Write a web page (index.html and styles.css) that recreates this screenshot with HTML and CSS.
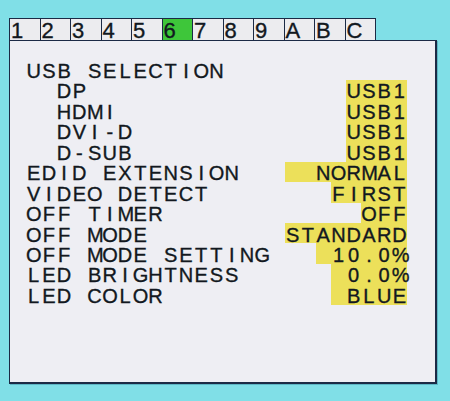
FILE: index.html
```html
<!DOCTYPE html>
<html>
<head>
<meta charset="utf-8">
<title>OSD</title>
<link rel="stylesheet" href="styles.css">
</head>
<body>
<div class="osd">
  <div class="tabs">
    <div class="tab">1</div><div class="tab">2</div><div class="tab">3</div><div class="tab">4</div><div class="tab">5</div><div class="tab on">6</div><div class="tab">7</div><div class="tab">8</div><div class="tab">9</div><div class="tab">A</div><div class="tab">B</div><div class="tab">C</div>
  </div>
  <div class="panel">
    <div class="row">
      <span class="lbl"><span class="c">U</span><span class="c">S</span><span class="c">B</span><span class="c">&nbsp;</span><span class="c">S</span><span class="c">E</span><span class="c">L</span><span class="c">E</span><span class="c">C</span><span class="c">T</span><span class="c">I</span><span class="c">O</span><span class="c">N</span></span>
    </div>
    <div class="row">
      <span class="lbl"><span class="c">&nbsp;</span><span class="c">&nbsp;</span><span class="c">D</span><span class="c">P</span></span>
      <span class="val"><span class="c">U</span><span class="c">S</span><span class="c">B</span><span class="c">1</span></span>
    </div>
    <div class="row">
      <span class="lbl"><span class="c">&nbsp;</span><span class="c">&nbsp;</span><span class="c">H</span><span class="c">D</span><span class="c">M</span><span class="c">I</span></span>
      <span class="val"><span class="c">U</span><span class="c">S</span><span class="c">B</span><span class="c">1</span></span>
    </div>
    <div class="row">
      <span class="lbl"><span class="c">&nbsp;</span><span class="c">&nbsp;</span><span class="c">D</span><span class="c">V</span><span class="c">I</span><span class="c">-</span><span class="c">D</span></span>
      <span class="val"><span class="c">U</span><span class="c">S</span><span class="c">B</span><span class="c">1</span></span>
    </div>
    <div class="row">
      <span class="lbl"><span class="c">&nbsp;</span><span class="c">&nbsp;</span><span class="c">D</span><span class="c">-</span><span class="c">S</span><span class="c">U</span><span class="c">B</span></span>
      <span class="val"><span class="c">U</span><span class="c">S</span><span class="c">B</span><span class="c">1</span></span>
    </div>
    <div class="row">
      <span class="lbl"><span class="c">E</span><span class="c">D</span><span class="c">I</span><span class="c">D</span><span class="c">&nbsp;</span><span class="c">E</span><span class="c">X</span><span class="c">T</span><span class="c">E</span><span class="c">N</span><span class="c">S</span><span class="c">I</span><span class="c">O</span><span class="c">N</span></span>
      <span class="val"><span class="c">&nbsp;</span><span class="c">&nbsp;</span><span class="c">N</span><span class="c">O</span><span class="c">R</span><span class="c">M</span><span class="c">A</span><span class="c">L</span></span>
    </div>
    <div class="row">
      <span class="lbl"><span class="c">V</span><span class="c">I</span><span class="c">D</span><span class="c">E</span><span class="c">O</span><span class="c">&nbsp;</span><span class="c">D</span><span class="c">E</span><span class="c">T</span><span class="c">E</span><span class="c">C</span><span class="c">T</span></span>
      <span class="val"><span class="c">F</span><span class="c">I</span><span class="c">R</span><span class="c">S</span><span class="c">T</span></span>
    </div>
    <div class="row">
      <span class="lbl"><span class="c">O</span><span class="c">F</span><span class="c">F</span><span class="c">&nbsp;</span><span class="c">T</span><span class="c">I</span><span class="c">M</span><span class="c">E</span><span class="c">R</span></span>
      <span class="val"><span class="c">O</span><span class="c">F</span><span class="c">F</span></span>
    </div>
    <div class="row">
      <span class="lbl"><span class="c">O</span><span class="c">F</span><span class="c">F</span><span class="c">&nbsp;</span><span class="c">M</span><span class="c">O</span><span class="c">D</span><span class="c">E</span></span>
      <span class="val"><span class="c">S</span><span class="c">T</span><span class="c">A</span><span class="c">N</span><span class="c">D</span><span class="c">A</span><span class="c">R</span><span class="c">D</span></span>
    </div>
    <div class="row">
      <span class="lbl"><span class="c">O</span><span class="c">F</span><span class="c">F</span><span class="c">&nbsp;</span><span class="c">M</span><span class="c">O</span><span class="c">D</span><span class="c">E</span><span class="c">&nbsp;</span><span class="c">S</span><span class="c">E</span><span class="c">T</span><span class="c">T</span><span class="c">I</span><span class="c">N</span><span class="c">G</span></span>
      <span class="val"><span class="c">&nbsp;</span><span class="c">1</span><span class="c">0</span><span class="c">.</span><span class="c">0</span><span class="c">%</span></span>
    </div>
    <div class="row">
      <span class="lbl"><span class="c">L</span><span class="c">E</span><span class="c">D</span><span class="c">&nbsp;</span><span class="c">B</span><span class="c">R</span><span class="c">I</span><span class="c">G</span><span class="c">H</span><span class="c">T</span><span class="c">N</span><span class="c">E</span><span class="c">S</span><span class="c">S</span></span>
      <span class="val"><span class="c">&nbsp;</span><span class="c">0</span><span class="c">.</span><span class="c">0</span><span class="c">%</span></span>
    </div>
    <div class="row">
      <span class="lbl"><span class="c">L</span><span class="c">E</span><span class="c">D</span><span class="c">&nbsp;</span><span class="c">C</span><span class="c">O</span><span class="c">L</span><span class="c">O</span><span class="c">R</span></span>
      <span class="val"><span class="c">&nbsp;</span><span class="c">B</span><span class="c">L</span><span class="c">U</span><span class="c">E</span></span>
    </div>
  </div>
</div>
</body>
</html>
```
FILE: styles.css
```css
html, body {
  margin: 0;
  padding: 0;
}
body {
  width: 450px;
  height: 401px;
  overflow: hidden;
  background: #80dfe7;
  font-family: "Liberation Sans", Arial, sans-serif;
  color: #121820;
}
.osd {
  margin: 18px 0 0 9px;
  width: 429px;
}
.tabs {
  display: flex;
  width: 367px;
  height: 22px;
  box-sizing: border-box;
  border: 1px solid #1b2a45;
  border-bottom: none;
  background: #ececef;
}
.tab {
  flex: 0 0 30.5px;
  box-sizing: border-box;
  border-right: 1px solid #1b2a45;
  font-size: 22px;
  line-height: 23px;
  padding-left: 1px;
  -webkit-text-stroke: 0.35px #121820;
}
.tab.on {
  background: #3ec63a;
}
.panel {
  box-sizing: border-box;
  width: 428px;
  height: 344px;
  border-style: solid;
  border-color: #1b2a45;
  border-width: 1px 2px 2px 1px;
  background: #eeeef3;
  padding: 18.5px 0 0 16px;
  box-shadow: 1px 1px 0 #5cb6c4;
}
.row {
  display: flex;
  justify-content: space-between;
  width: 381px;
  height: 20.45px;
}
.lbl, .val {
  display: flex;
}
.val {
  background: #ece05a;
}
.c {
  display: block;
  width: 15.24px;
  height: 20.45px;
  box-sizing: border-box;
  padding-top: 1.5px;
  text-align: center;
  font-size: 20px;
  line-height: 20px;
  -webkit-text-stroke: 0.35px #121820;
}
```
